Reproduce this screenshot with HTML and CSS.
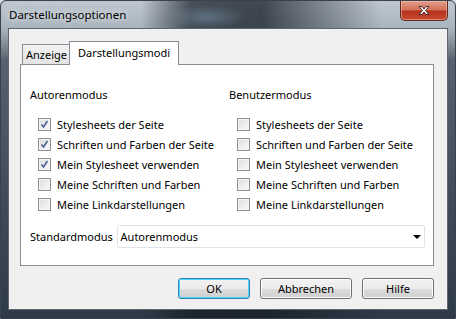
FILE: index.html
```html
<!DOCTYPE html>
<html>

<head>
    <title>Darstellungsoptionen</title>
    <link rel="stylesheet" href="styles.css">
</head>

<body>
    <div class="window">
        <div class="titlebar">
            <span class="title">Darstellungsoptionen</span>
            <div class="close">
                <svg width="14" height="11" viewBox="0 0 14 11">
                    <path d="M2 1.5h3l2 2.5 2-2.5h3l-3.5 4 3.5 4h-3l-2-2.5-2 2.5h-3l3.5-4z" fill="#fff" stroke="#4a2a24" stroke-width="1" stroke-linejoin="round" />
                </svg>
            </div>
        </div>

        <div class="client">
            <div class="tabs">
                <div class="tab">Anzeige</div>
                <div class="tab active">Darstellungsmodi</div>
            </div>

            <div class="panel">
                <div class="columns">
                    <div class="col">
                        <div class="heading">Autorenmodus</div>
                        <div class="check"><span class="box checked"></span>Stylesheets der Seite</div>
                        <div class="check"><span class="box checked"></span>Schriften und Farben der Seite</div>
                        <div class="check"><span class="box checked"></span>Mein Stylesheet verwenden</div>
                        <div class="check"><span class="box"></span>Meine Schriften und Farben</div>
                        <div class="check"><span class="box"></span>Meine Linkdarstellungen</div>
                    </div>
                    <div class="col">
                        <div class="heading">Benutzermodus</div>
                        <div class="check"><span class="box"></span>Stylesheets der Seite</div>
                        <div class="check"><span class="box"></span>Schriften und Farben der Seite</div>
                        <div class="check"><span class="box"></span>Mein Stylesheet verwenden</div>
                        <div class="check"><span class="box"></span>Meine Schriften und Farben</div>
                        <div class="check"><span class="box"></span>Meine Linkdarstellungen</div>
                    </div>
                </div>

                <div class="mode-row">
                    <span class="mode-label">Standardmodus</span>
                    <div class="select">
                        <span>Autorenmodus</span>
                        <span class="arrow"></span>
                    </div>
                </div>
            </div>

            <div class="buttons">
                <button class="btn default" type="button">OK</button>
                <button class="btn wide" type="button">Abbrechen</button>
                <button class="btn" type="button">Hilfe</button>
            </div>
        </div>
    </div>
</body>

</html>
```

FILE: styles.css
```css
* {
    margin: 0;
    padding: 0;
    box-sizing: border-box;
}

body {
    width: 456px;
    height: 319px;
    font-family: 'Noto Sans', 'Open Sans', sans-serif;
    font-size: 11px;
    color: #000;
    background: #d8dde2;
    overflow: hidden;
}

.window {
    width: 456px;
    height: 319px;
    padding: 0 7px 8px 7px;
    border: 1px solid #39424b;
    border-radius: 6px 6px 0 0;
    background:
        radial-gradient(ellipse 40px 12px at 205px 16px, rgba(120, 150, 175, 0.5), rgba(0, 0, 0, 0)),
        linear-gradient(to right, rgba(0, 0, 0, 0) 0, rgba(0, 0, 0, 0) 140px, rgba(20, 28, 36, 0.7) 190px, rgba(20, 28, 36, 0.75) 260px, rgba(0, 0, 0, 0) 380px),
        linear-gradient(to bottom, #bfc8d0 0, #a9b3bc 28px, #55616c 60px, #2d3a47 100%);
    display: flex;
    flex-direction: column;
}

.titlebar {
    height: 27px;
    display: flex;
    align-items: flex-start;
    padding-left: 1px;
}

.title {
    margin-top: 6px;
    font-size: 11.5px;
    text-shadow: 0 0 6px rgba(255, 255, 255, 0.9);
}

.close {
    margin-left: auto;
    width: 48px;
    height: 20px;
    border: 1px solid #5b2a22;
    border-top: none;
    border-radius: 0 0 5px 5px;
    background: linear-gradient(to bottom, #e2a08c 0, #d2705a 45%, #b8321d 55%, #c44a2e 100%);
    box-shadow: inset 0 0 0 1px rgba(255, 200, 180, 0.5);
    display: flex;
    align-items: center;
    justify-content: center;
}

.client {
    flex: 1;
    background: #f0f0f0;
    border: 1px solid #5d6873;
    padding: 12px 13px 0 11px;
}

.tabs {
    display: flex;
    align-items: flex-end;
    height: 23px;
    padding-left: 2px;
}

.tab {
    height: 20px;
    padding: 0 3px;
    line-height: 19px;
    border: 1px solid #898c95;
    border-bottom: none;
    background: linear-gradient(to bottom, #f2f2f2, #e3e3e3);
}

.tab.active {
    height: 24px;
    margin-left: -2px;
    margin-bottom: -1px;
    padding: 0 8px;
    line-height: 21px;
    background: #fff;
    position: relative;
    z-index: 1;
}

.panel {
    height: 202px;
    background: #fff;
    border: 1px solid #898c95;
    padding: 22px 8px 0 9px;
}

.columns {
    display: grid;
    grid-template-columns: 199px 1fr;
}

.heading {
    line-height: 16px;
    margin-bottom: 11px;
}

.check {
    display: flex;
    align-items: center;
    height: 20px;
    padding-left: 8px;
    white-space: nowrap;
}

.box {
    flex: none;
    width: 13px;
    height: 13px;
    margin-right: 6px;
    border: 1px solid #8e8f8f;
    background: linear-gradient(135deg, #dcdcdc, #fbfbfb);
    box-shadow: inset 0 0 0 1px #f4f4f4;
}

.box.checked {
    background:
        url("data:image/svg+xml,%3Csvg xmlns='http://www.w3.org/2000/svg' width='11' height='11'%3E%3Cpath d='M2.5 5.5l2 2.5 4-6' fill='none' stroke='%234a5f97' stroke-width='1.6'/%3E%3C/svg%3E") center / 11px 11px no-repeat,
        linear-gradient(135deg, #dcdcdc, #fbfbfb);
}

.mode-row {
    display: flex;
    align-items: center;
    margin-top: 11px;
}

.mode-label {
    width: 87px;
}

.select {
    width: 310px;
    height: 23px;
    border: 1px solid #dfe3e8;
    border-radius: 2px;
    background: #fff;
    display: flex;
    align-items: center;
    padding-left: 3px;
}

.arrow {
    margin-left: auto;
    margin-right: 3px;
    width: 0;
    height: 0;
    border-left: 4px solid transparent;
    border-right: 4px solid transparent;
    border-top: 4px solid #000;
}

.buttons {
    display: flex;
    justify-content: flex-end;
    gap: 10px;
    margin-top: 12px;
}

.btn {
    width: 72px;
    height: 21px;
    font-family: inherit;
    font-size: 11px;
    color: #000;
    border: 1px solid #707070;
    border-radius: 3px;
    background: linear-gradient(to bottom, #f2f2f2 0, #ebebeb 50%, #dddddd 50%, #cfcfcf 100%);
    box-shadow: inset 0 0 0 1px #fcfcfc;
}

.btn.wide {
    width: 92px;
}

.btn.default {
    border-color: #3c7fb1;
    box-shadow: inset 0 0 0 1px #48d8fb;
}
```
